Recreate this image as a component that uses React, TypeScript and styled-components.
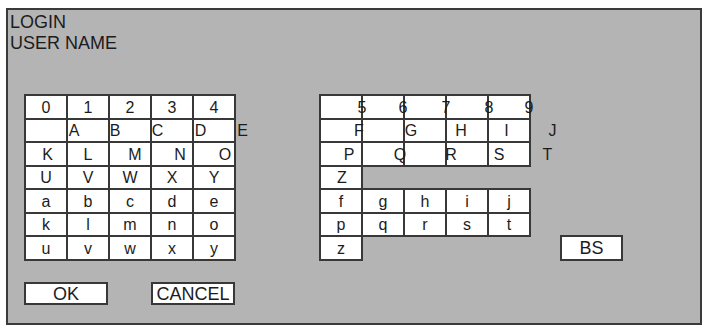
import styled, { createGlobalStyle } from "styled-components";

// [label, horizontal shift from cell centre in px]
type Key = [string, number];

type KeyRow = {
  keys: Key[];
  tail?: Key;
};

const GlobalStyle = createGlobalStyle`
  body {
    margin: 0;
    background: #ffffff;
    font-family: "Liberation Sans", Arial, sans-serif;
  }
`;

const Panel = styled.div`
  box-sizing: border-box;
  width: 696px;
  height: 317px;
  margin: 8px 0 0 6px;
  padding: 2px 0 0 2px;
  background: #b4b4b4;
  border: 2px solid #3a3a3a;
  color: #1c1c1c;
`;

const Heading = styled.div`
  font-size: 18px;
  line-height: 21px;
`;

const Board = styled.div`
  display: flex;
  gap: 83px;
  margin: 40px 0 0 14px;
`;

const Column = styled.div`
  display: flex;
  flex-direction: column;
  width: 212px;
`;

const Grid = styled.div`
  display: flex;
  flex-direction: column;
`;

const Row = styled.div`
  display: flex;
  height: 25.5px;
  & + & {
    margin-top: -2px;
  }
`;

const Cell = styled.div<{ $ghost?: boolean }>`
  box-sizing: border-box;
  flex: 0 0 44px;
  height: 25.5px;
  display: flex;
  align-items: center;
  justify-content: center;
  border: 2px solid ${(p) => (p.$ghost ? "transparent" : "#383838")};
  background: ${(p) => (p.$ghost ? "transparent" : "#ffffff")};
  font-size: 16px;
  white-space: nowrap;
  & + & {
    margin-left: -2px;
  }
`;

const Label = styled.span<{ $dx: number }>`
  display: inline-block;
  transform: translate(${(p) => p.$dx}px, 1px);
`;

const ButtonRow = styled.div`
  display: flex;
  gap: 43px;
  margin-top: 21.5px;
`;

const Button = styled.button<{ $width: number; $height: number }>`
  box-sizing: border-box;
  flex: 0 0 ${(p) => p.$width}px;
  width: ${(p) => p.$width}px;
  height: ${(p) => p.$height}px;
  padding: 0;
  border: 2px solid #383838;
  background: #ffffff;
  color: #1c1c1c;
  font-family: "Liberation Sans", Arial, sans-serif;
  font-size: 18px;
  line-height: 1;
`;

const BackButton = styled(Button)`
  margin-left: 197px;
`;

const c = (s: string): Key[] => s.split("").map((ch) => [ch, 0]);

const leftRows: KeyRow[] = [
  { keys: c("01234") },
  {
    keys: [
      ["", 0],
      ["A", -14],
      ["B", -15],
      ["C", -14.5],
      ["D", -13.5],
    ],
    tail: ["E", -13.5],
  },
  {
    keys: [
      ["K", 1.5],
      ["L", 0],
      ["M", 5],
      ["N", 8],
      ["O", 11],
    ],
  },
  { keys: c("UVWXY") },
  { keys: c("abcde") },
  { keys: c("klmno") },
  { keys: c("uvwxy") },
];

const rightRows: KeyRow[] = [
  {
    keys: [
      ["5", 21],
      ["6", 20],
      ["7", 21],
      ["8", 22],
      ["9", 20],
    ],
  },
  {
    keys: [
      ["F", 18],
      ["", 0],
      ["G", -14],
      ["H", -6],
      ["I", -2.5],
    ],
    tail: ["J", 1.5],
  },
  {
    keys: [
      ["P", 8],
      ["Q", 17],
      ["", 0],
      ["R", -16],
      ["S", -10],
    ],
    tail: ["T", -3.5],
  },
  { keys: [["Z", 1]] },
  { keys: c("fghij") },
  { keys: c("pqrst") },
  { keys: [["z", 0]] },
];

const KeyGrid = ({ rows, extra }: { rows: KeyRow[]; extra?: React.ReactNode }) => (
  <Grid>
    {rows.map((row, i) => (
      <Row key={i}>
        {row.keys.map(([text, dx], j) => (
          <Cell key={j}>
            <Label $dx={dx}>{text}</Label>
          </Cell>
        ))}
        {row.tail && (
          <Cell $ghost>
            <Label $dx={row.tail[1]}>{row.tail[0]}</Label>
          </Cell>
        )}
        {i === rows.length - 1 && extra}
      </Row>
    ))}
  </Grid>
);

const App = () => {
  return (
    <>
      <GlobalStyle />
      <Panel>
        <Heading>
          LOGIN
          <br />
          USER NAME
        </Heading>
        <Board>
          <Column>
            <KeyGrid rows={leftRows} />
            <ButtonRow>
              <Button $width={84} $height={23}>OK</Button>
              <Button $width={84} $height={23}>CANCEL</Button>
            </ButtonRow>
          </Column>
          <Column>
            <KeyGrid
              rows={rightRows}
              extra={
                <BackButton $width={63} $height={25.5}>
                  BS
                </BackButton>
              }
            />
          </Column>
        </Board>
      </Panel>
    </>
  );
};

export default App;
